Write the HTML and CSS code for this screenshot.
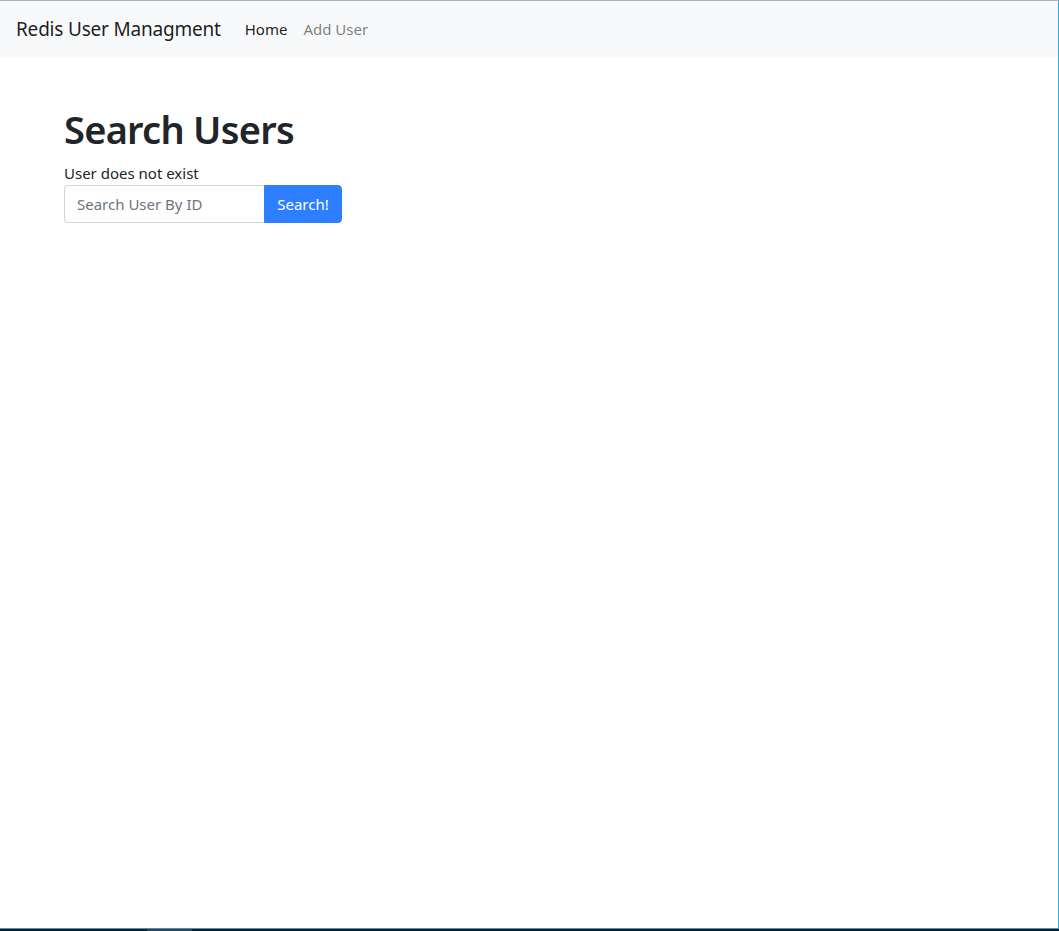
FILE: index.html
```html
<!DOCTYPE html>
<html lang="en">
<head>
<meta charset="utf-8">
<title>Redis User Managment</title>
<link rel="stylesheet" href="styles.css">
</head>
<body>
<div class="frame">
  <nav class="navbar">
    <a class="brand" href="#">Redis User Managment</a>
    <ul class="nav">
      <li><a class="nav-link active" href="#">Home</a></li>
      <li><a class="nav-link" href="#">Add User</a></li>
    </ul>
  </nav>
  <main class="container">
    <h1 class="title">Search Users</h1>
    <p class="message">User does not exist</p>
    <form class="input-group">
      <input class="form-control" type="text" placeholder="Search User By ID">
      <button class="btn" type="button">Search!</button>
    </form>
  </main>
</div>
<div class="taskbar">
  <span class="seg-left"></span><span class="seg-active"></span><span class="seg-rest"></span>
</div>
</body>
</html>
```
FILE: styles.css
```css
* { box-sizing: border-box; }
html, body {
  margin: 0;
  padding: 0;
  background: #1c1c1c;
  font-family: "Noto Sans", "Open Sans", sans-serif;
  color: #212529;
}
.frame {
  height: 929px;
  width: 1059px;
  background: #fff;
  border-top: 1px solid #b3b3b3;
  border-right: 1px solid #3ba3e3;
  border-bottom: 1px solid #2f96d8;
  display: flex;
  flex-direction: column;
}
.navbar {
  height: 56px;
  background: #f8f9fa;
  display: flex;
  align-items: center;
  padding: 0 16px;
}
.brand {
  font-size: 19px;
  color: rgba(0,0,0,.9);
  text-decoration: none;
  margin-right: 16px;
  letter-spacing: -0.2px;
}
.nav {
  list-style: none;
  margin: 0;
  padding: 0;
  display: flex;
}
.nav-link {
  display: block;
  padding: 8px;
  font-size: 15px;
  color: rgba(0,0,0,.5);
  text-decoration: none;
}
.nav-link.active { color: rgba(0,0,0,.9); }
.container {
  padding: 48px 64px 0;
}
.title {
  margin: 0 0 8px;
  font-size: 38px;
  font-weight: 600;
  line-height: 48px;
  letter-spacing: -0.75px;
}
.message {
  margin: 0;
  font-size: 15px;
  line-height: 24px;
}
.input-group {
  display: flex;
  margin: 0;
}
.form-control {
  width: 200px;
  height: 38px;
  border: 1px solid #ced4da;
  border-right: none;
  border-radius: 4px 0 0 4px;
  padding: 6px 12px;
  font-family: inherit;
  font-size: 15px;
  color: #495057;
  outline: none;
}
.form-control::placeholder { color: #6c757d; }
.btn {
  width: 78px;
  height: 38px;
  border: 1px solid #2e7fff;
  background: #2e7fff;
  color: #fff;
  border-radius: 0 4px 4px 0;
  font-family: inherit;
  font-size: 15px;
  padding: 0;
}
.taskbar {
  height: 2px;
  display: flex;
}
.seg-left { width: 147px; background: #1c1c1c; }
.seg-active { width: 45px; background: #3a4046; }
.seg-rest { flex: 1; background: #1c1c1c; }
```
